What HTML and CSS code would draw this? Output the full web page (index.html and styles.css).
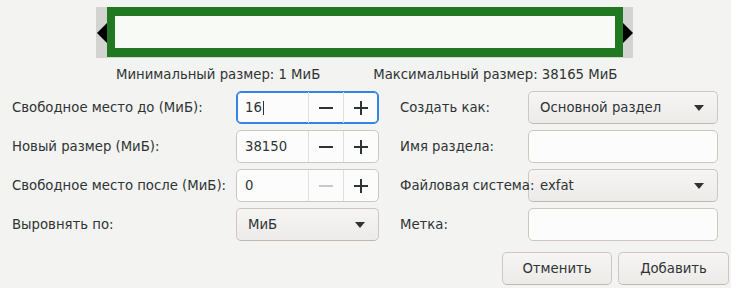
FILE: index.html
```html
<!DOCTYPE html>
<html lang="ru">
<head>
  <meta charset="UTF-8" />
  <title>Создать новый раздел</title>
  <link rel="stylesheet" href="styles.css">
</head>
<body>
  <div class="dialog">
    <div class="resizer">
      <div class="side left"><span class="arrow-left"></span></div>
      <div class="partition"><div class="free"></div></div>
      <div class="side right"><span class="arrow-right"></span></div>
    </div>

    <div class="limits">
      <span class="min">Минимальный размер: 1 МиБ</span>
      <span class="max">Максимальный размер: 38165 МиБ</span>
    </div>

    <div class="form">
      <label class="lbl">Свободное место до (МиБ):</label>
      <div class="spin focused">
        <div class="spin-text">16<span class="caret"></span></div>
        <div class="spin-btn"><span class="minus"></span></div>
        <div class="spin-btn"><span class="plus"></span></div>
      </div>
      <label class="lbl right-lbl">Создать как:</label>
      <div class="combo"><span>Основной раздел</span><span class="drop"></span></div>

      <label class="lbl">Новый размер (МиБ):</label>
      <div class="spin">
        <div class="spin-text">38150</div>
        <div class="spin-btn"><span class="minus"></span></div>
        <div class="spin-btn"><span class="plus"></span></div>
      </div>
      <label class="lbl right-lbl">Имя раздела:</label>
      <div class="entry"></div>

      <label class="lbl">Свободное место после (МиБ):</label>
      <div class="spin">
        <div class="spin-text">0</div>
        <div class="spin-btn disabled"><span class="minus"></span></div>
        <div class="spin-btn"><span class="plus"></span></div>
      </div>
      <label class="lbl right-lbl overlap">Файловая система:</label>
      <div class="combo"><span>exfat</span><span class="drop"></span></div>

      <label class="lbl">Выровнять по:</label>
      <div class="combo"><span>МиБ</span><span class="drop"></span></div>
      <label class="lbl right-lbl">Метка:</label>
      <div class="entry"></div>
    </div>

    <div class="actions">
      <button class="btn cancel">Отменить</button>
      <button class="btn add">Добавить</button>
    </div>
  </div>
</body>
</html>
```

FILE: styles.css
```css
body {
  margin: 0;
  background: #f3f3f1;
  color: #2e3436;
  font-family: "DejaVu Sans", sans-serif;
  font-size: 13.25px;
}

.dialog {
  width: 731px;
  height: 288px;
  overflow: hidden;
  padding-top: 7px;
  box-sizing: border-box;
}

/* partition size bar */
.resizer {
  display: flex;
  margin-left: 96px;
  width: 537px;
  height: 51px;
  background: #d3d3cf;
}

.side {
  display: flex;
  align-items: center;
}

.side.left {
  width: 11px;
  justify-content: flex-end;
}

.side.right {
  width: 10px;
}

.arrow-left {
  width: 0;
  height: 0;
  border-top: 10px solid transparent;
  border-bottom: 10px solid transparent;
  border-right: 10px solid #000;
}

.arrow-right {
  width: 0;
  height: 0;
  border-top: 10px solid transparent;
  border-bottom: 10px solid transparent;
  border-left: 10px solid #000;
}

.partition {
  width: 516px;
  height: 50px;
  box-sizing: border-box;
  border: 9px solid #217821;
  border-left-width: 8px;
  border-right-width: 8px;
}

.free {
  height: 100%;
  background: #f8faf6;
}

.limits {
  display: flex;
  height: 33px;
  align-items: center;
}

.limits .min {
  margin-left: 116px;
}

.limits .max {
  margin-left: 53px;
}

/* form grid */
.form {
  display: grid;
  grid-template-columns: 224px 143px 149px 190px;
  grid-auto-rows: 33px;
  row-gap: 6px;
  padding-left: 12px;
}

.lbl {
  display: flex;
  align-items: center;
  white-space: nowrap;
}

.right-lbl {
  padding-left: 21px;
}

.overlap {
  position: relative;
  z-index: 1;
}

.spin {
  display: flex;
  background: #fcfcfc;
  border: 1px solid #cdc7c2;
  border-radius: 5px;
  box-sizing: border-box;
}

.spin.focused {
  border-color: #3584e4;
  box-shadow: inset 0 0 0 1px #3584e4;
}

.spin-text {
  width: 72px;
  display: flex;
  align-items: center;
  padding-left: 8px;
  box-sizing: border-box;
}

.caret {
  display: inline-block;
  width: 1px;
  height: 14px;
  background: #2e3436;
  margin-left: 1px;
}

.spin-btn {
  width: 35px;
  border-left: 1px solid #e3dfdb;
  display: flex;
  align-items: center;
  justify-content: center;
}

.minus,
.plus {
  position: relative;
  display: block;
  width: 14px;
  height: 14px;
}

.minus::before,
.plus::before,
.plus::after {
  content: "";
  position: absolute;
  background: #2e3436;
}

.minus::before,
.plus::before {
  left: 0;
  top: 6px;
  width: 14px;
  height: 2px;
}

.plus::after {
  left: 6px;
  top: 0;
  width: 2px;
  height: 14px;
}

.spin-btn.disabled .minus::before {
  background: #c9c8c5;
}

.combo {
  display: flex;
  align-items: center;
  justify-content: space-between;
  padding: 0 13px 0 11px;
  border: 1px solid #cdc7c2;
  border-bottom-color: #bfb8b1;
  border-radius: 5px;
  background: linear-gradient(#f6f5f4, #edebe9);
  box-sizing: border-box;
}

.drop {
  width: 0;
  height: 0;
  border-left: 5px solid transparent;
  border-right: 5px solid transparent;
  border-top: 6px solid #2e3436;
}

.entry {
  background: #fcfcfc;
  border: 1px solid #cdc7c2;
  border-radius: 5px;
}

/* buttons */
.actions {
  display: flex;
  justify-content: flex-end;
  gap: 6px;
  padding-right: 2px;
  margin-top: 11px;
}

.btn {
  height: 33px;
  font-family: inherit;
  font-size: 13.25px;
  color: #2e3436;
  border: 1px solid #cdc7c2;
  border-bottom-color: #bfb8b1;
  border-radius: 5px;
  background: linear-gradient(#f6f5f4, #edebe9);
}

.cancel {
  width: 110px;
}

.add {
  width: 111px;
}
```
